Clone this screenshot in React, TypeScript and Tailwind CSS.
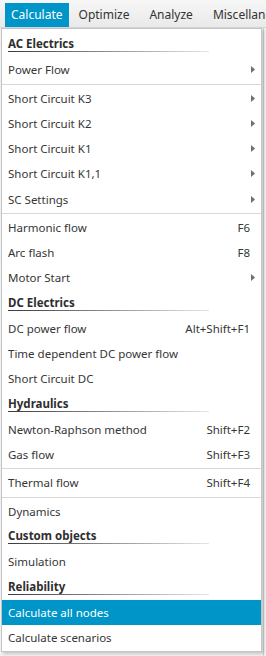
import React from "react";

type Row =
  | { t: "h"; label: string }
  | { t: "i"; label: string; arrow?: boolean; key?: string; active?: boolean }
  | { t: "s" };

const rows: Row[] = [
  { t: "h", label: "AC Electrics" },
  { t: "i", label: "Power Flow", arrow: true },
  { t: "s" },
  { t: "i", label: "Short Circuit K3", arrow: true },
  { t: "i", label: "Short Circuit K2", arrow: true },
  { t: "i", label: "Short Circuit K1", arrow: true },
  { t: "i", label: "Short Circuit K1,1", arrow: true },
  { t: "i", label: "SC Settings", arrow: true },
  { t: "s" },
  { t: "i", label: "Harmonic flow", key: "F6" },
  { t: "i", label: "Arc flash", key: "F8" },
  { t: "i", label: "Motor Start", arrow: true },
  { t: "h", label: "DC Electrics" },
  { t: "i", label: "DC power flow", key: "Alt+Shift+F1" },
  { t: "i", label: "Time dependent DC power flow" },
  { t: "i", label: "Short Circuit DC" },
  { t: "h", label: "Hydraulics" },
  { t: "i", label: "Newton-Raphson method", key: "Shift+F2" },
  { t: "i", label: "Gas flow", key: "Shift+F3" },
  { t: "s" },
  { t: "i", label: "Thermal flow", key: "Shift+F4" },
  { t: "s" },
  { t: "i", label: "Dynamics" },
  { t: "h", label: "Custom objects" },
  { t: "i", label: "Simulation" },
  { t: "h", label: "Reliability" },
  { t: "i", label: "Calculate all nodes", active: true },
  { t: "i", label: "Calculate scenarios" },
];

function Arrow() {
  return (
    <svg width="4" height="7" viewBox="0 0 4 7" className="block">
      <path d="M0 0 L4 3.5 L0 7 Z" fill="#6e6e6e" />
    </svg>
  );
}

export default function App() {
  return (
    <div
      className="relative w-[266px] h-[656px] overflow-hidden bg-[#ececec]"
      style={{ fontFamily: '"Noto Sans", "Open Sans", sans-serif' }}
    >
      {/* menubar */}
      <div className="h-[28px] flex items-center gap-[4px] pl-[5px] bg-[linear-gradient(#f7f7f7,#e9e9e9)] border-b border-[#d6d6d6] text-[12px] text-[#333] whitespace-nowrap">
        <div className="h-[24px] mt-[2px] flex items-center px-[6px] bg-[#0095c8] text-white">Calculate</div>
        <div className="h-[24px] mt-[2px] flex items-center px-[6px]">Optimize</div>
        <div className="h-[24px] mt-[2px] flex items-center px-[6px] ml-[4px]">Analyze</div>
        <div className="h-[24px] mt-[2px] flex items-center px-[6px] ml-[4px]">Miscellaneous</div>
      </div>

      {/* background canvas */}
      <div className="h-[628px] bg-[#f2f2f2] bg-[linear-gradient(90deg,transparent_263px,#cfcfcf_263px,#cfcfcf_264px,transparent_264px)]" />

      {/* dropdown menu */}
      <div className="absolute left-[1px] top-[28px] w-[261px] bg-white border border-[#c4c4c4] pt-[3px] pb-[1px] shadow-[2px_2px_3px_rgba(0,0,0,0.18)] text-[11.5px] text-[#363636]">
        {rows.map((r, i) => {
          if (r.t === "s")
            return (
              <div key={i} className="h-[3px] pt-[1px]">
                <div className="h-px bg-[#d8d8d8]" />
              </div>
            );
          if (r.t === "h")
            return (
              <div key={i} className="h-[25.25px] pl-[6px] flex flex-col justify-end">
                <div className="font-bold text-[#2e2e2e] leading-[15px]">{r.label}</div>
                <div className="mt-0 mb-[5px] w-[201px] h-px bg-[linear-gradient(90deg,#3a3a3a,#e6e6e6)]" />
              </div>
            );
          return (
            <div
              key={i}
              className={
                "h-[25.25px] flex items-center pl-[6px] pr-[6px] " +
                (r.active ? "bg-[#0095c8] text-white" : "")
              }
            >
              <span className="flex-1 whitespace-nowrap">{r.label}</span>
              {r.key && <span className="pr-[5px] whitespace-nowrap">{r.key}</span>}
              {r.arrow && <Arrow />}
            </div>
          );
        })}
      </div>
    </div>
  );
}
